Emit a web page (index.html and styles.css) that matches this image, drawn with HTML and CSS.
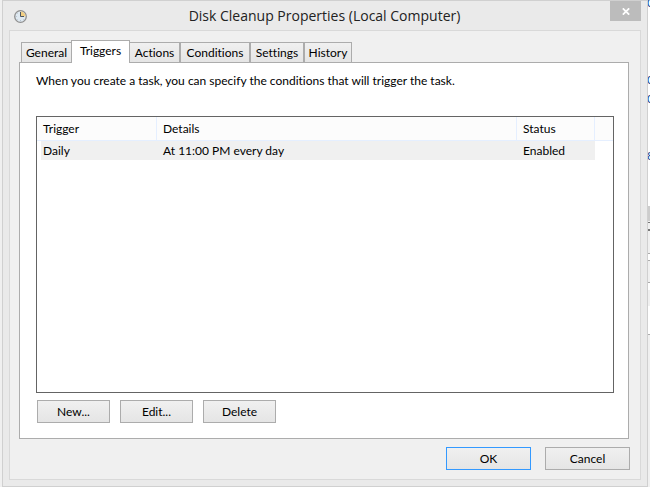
FILE: index.html
```html
<!DOCTYPE html>
<html lang="en">
<head>
<meta charset="utf-8">
<title>Disk Cleanup Properties (Local Computer)</title>
<link rel="stylesheet" href="styles.css">
</head>
<body>
<div class="desktop">
  <main class="window">
    <header class="titlebar">
      <svg class="clock" viewBox="0 0 14 14" aria-hidden="true">
        <circle cx="7.5" cy="7.5" r="5.8" fill="#dfe9f1" stroke="#8f8f8f" stroke-width="1.3"/>
        <path d="M7.5 7.5V2.5a5 5 0 0 1 5 5z" fill="#f3cf83"/>
        <path d="M7.5 3V7.5H11" fill="none" stroke="#4c5661" stroke-width="1"/>
        <path d="M2.8 7.5h1M7.5 11v1M4.1 4.1l.6.6M4.1 10.9l.6-.6M10.9 10.9l-.6-.6" stroke="#a3b2c0" stroke-width=".7"/>
      </svg>
      <h1 class="title">Disk Cleanup Properties (Local Computer)</h1>
      <button class="close" type="button" aria-label="Close">
        <svg viewBox="0 0 8 7" aria-hidden="true"><path d="M.8.3 7.2 6.7M7.2.3.8 6.7" stroke="#fff" stroke-width="1.7"/></svg>
      </button>
    </header>
    <div class="client">
      <div class="tabs" role="tablist">
        <button class="tab tab-general" type="button" role="tab">General</button>
        <button class="tab tab-active" type="button" role="tab" aria-selected="true">Triggers</button>
        <button class="tab tab-actions" type="button" role="tab">Actions</button>
        <button class="tab tab-conditions" type="button" role="tab">Conditions</button>
        <button class="tab tab-settings" type="button" role="tab">Settings</button>
        <button class="tab tab-history" type="button" role="tab">History</button>
      </div>
      <section class="panel" role="tabpanel">
        <p class="intro">When you create a task, you can specify the conditions that will trigger the task.</p>
        <div class="list">
          <table class="triggers">
            <colgroup><col class="col-trigger"><col><col class="col-status"><col class="col-rest"></colgroup>
            <thead><tr><th>Trigger</th><th>Details</th><th>Status</th><th class="rest"></th></tr></thead>
            <tbody><tr><td>Daily</td><td>At 11:00 PM every day</td><td>Enabled</td><td class="rest"></td></tr></tbody>
          </table>
        </div>
        <div class="actions">
          <button class="btn" type="button">New...</button>
          <button class="btn" type="button">Edit...</button>
          <button class="btn" type="button">Delete</button>
        </div>
      </section>
      <footer class="footer">
        <button class="btn btn-wide btn-default" type="button">OK</button>
        <button class="btn btn-wide" type="button">Cancel</button>
      </footer>
    </div>
  </main>
  <div class="behind" aria-hidden="true">
    <span class="glyph glyph-a">0</span>
    <span class="glyph glyph-b">0</span>
    <span class="glyph glyph-c">0</span>
    <span class="glyph glyph-d">8</span>
  </div>
</div>
</body>
</html>
```
FILE: styles.css
```css
* { box-sizing: border-box; }

body {
  margin: 0;
  background: #f0f0f0;
  color: #000;
  font: 12px/16px Lato, "Open Sans", sans-serif;
  font-variant-ligatures: none;
}

button {
  font: inherit;
  font-variant-ligatures: none;
  color: inherit;
}

.desktop {
  display: flex;
  min-height: 100vh;
  padding-left: 2px;
}

.window {
  flex: 1;
  display: flex;
  flex-direction: column;
  padding: 0 6px 6px;
  border: 1px solid #d0d0d0;
  background: #eaeaea;
}

.titlebar {
  display: flex;
  align-items: flex-start;
  height: 29px;
}

.clock {
  width: 14px;
  height: 14px;
  margin: 8px 0 0 4px;
}

.title {
  flex: 1;
  margin: 4px 0 0 12px;
  color: #222;
  font-family: "Open Sans", sans-serif;
  font-size: 14px;
  font-weight: 400;
  line-height: 22px;
  text-align: center;
}

.close {
  display: flex;
  align-items: center;
  justify-content: center;
  width: 31px;
  height: 20px;
  padding: 0;
  border: 0;
  background: #bcbcbc;
}

.close svg { width: 8px; height: 7px; }

.client {
  flex: 1;
  display: flex;
  flex-direction: column;
  padding: 9px 11px 9px 9px;
  border: 1px solid #d9d9d9;
  background: #f0f0f0;
}

.tabs {
  display: flex;
  align-items: flex-end;
  padding-left: 2px;
}

.tab {
  height: 20px;
  padding: 0;
  border: 1px solid #acacac;
  border-width: 1px 1px 0 1px;
  background: linear-gradient(#f0f0f0, #e5e5e5);
  line-height: 18px;
  white-space: nowrap;
}

.tab-general { width: 50px; border-right: 0; }
.tab-actions { width: 50px; border-left: 0; }
.tab-conditions { width: 70px; }
.tab-settings { width: 54px; }
.tab-history { width: 48px; }

.tab-active {
  z-index: 1;
  width: 59px;
  height: 23px;
  margin-bottom: -1px;
  padding-bottom: 2px;
  background: #fff;
}

.panel {
  flex: 1;
  display: flex;
  flex-direction: column;
  padding: 10px 14px 15px 16px;
  border: 1px solid #acacac;
  background: #fff;
}

.intro { margin: 0 0 27px; }

.list {
  flex: 1;
  border: 1px solid #646464;
}

.triggers {
  width: 100%;
  border-collapse: separate;
  border-spacing: 0;
  table-layout: fixed;
}

.col-trigger { width: 120px; }
.col-status { width: 78px; }
.col-rest { width: 18px; }

.triggers th,
.triggers td {
  padding: 0 6px;
  font-weight: 400;
  text-align: left;
}

.triggers th {
  height: 24px;
  border: 1px solid #e5efff;
  border-width: 0 1px 1px 0;
  background: #fcfcfc;
}

.triggers td { height: 19px; background: #f0f0f0; }
.triggers td:first-child { background: linear-gradient(to right, #fff 4px, #f0f0f0 4px); }
.triggers th.rest { padding: 0; border-right: 0; }
.triggers td.rest { padding: 0; background: #fff; }

.actions {
  display: flex;
  gap: 10px;
  padding: 7px 0 0 1px;
}

.btn {
  width: 73px;
  height: 23px;
  padding: 0;
  border: 1px solid #acacac;
  background: linear-gradient(#f0f0f0, #e5e5e5);
}

.btn-wide { width: 85px; }
.btn-default { border: 1px solid #3399ff; }

.footer {
  display: flex;
  justify-content: flex-end;
  gap: 14px;
  padding-top: 8px;
  margin-right: -1px;
}

/* Sliver of the window that lies behind the dialog */
.behind {
  position: relative;
  overflow: hidden;
  width: 2px;
  background: linear-gradient(
    #fff 206px, #cdcdcd 206px 221px, #f0f0f0 221px 222px, #777 222px 223px,
    #f0f0f0 223px 229px, #777 229px 231px, #f0f0f0 231px 253px, #acacac 253px 254px,
    #fff 254px 260px, #acacac 260px 261px, #f0f0f0 261px 282px, #acacac 282px 283px,
    #fff 283px 290px, #f0f0f0 290px 306px, #fff 306px 334px, #acacac 334px 335px, #f0f0f0 335px);
}

.glyph { position: absolute; left: -1px; color: #123f91; }
.glyph-a { top: -5px; }
.glyph-b { top: 72px; }
.glyph-c { top: 91px; }
.glyph-d { top: 148px; }
```
